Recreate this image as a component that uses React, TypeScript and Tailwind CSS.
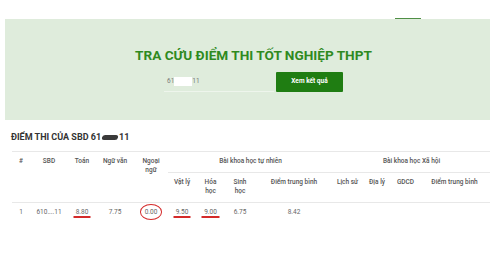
import React from "react";

const th = "font-medium text-[#555] text-[6.5px] leading-[9px] align-top pt-[5px] pb-[6px] text-center";
const td = "text-[#666] text-[6.5px] leading-[9px] pt-[5px] pb-[5px] text-center";

function Under({ v }: { v: string }) {
	return <span className="px-[3px] shadow-[0_2.5px_0_-0.5px_#d42a2a]">{v}</span>;
}

export default function App() {
	return (
		<div className="w-[500px] h-[258px] bg-white font-['Roboto',sans-serif] overflow-hidden">
			<div className="h-[19px] flex justify-end pr-[79px] items-end">
				<div className="w-[26px] h-[1.5px] bg-[#4f8f46]" />
			</div>
			<div className="mx-[5px] w-[485px] h-[101px] bg-[#dfecdc] flex flex-col items-center pl-[12px] pt-[28px]">
				<h1 className="text-[13.6px] leading-[16px] font-bold text-[#2f8a1f]">
					TRA CỨU ĐIỂM THI TỐT NGHIỆP THPT
				</h1>
				<div className="flex mt-[9px] h-[20px] gap-[2px]">
					<div className="w-[110px] border-b border-[#eef5ec] flex items-center pl-[3px] text-[6.5px] text-[#777]">
						<span>61</span>
						<span className="inline-block w-[18px] h-[9px] bg-white" />
						<span>11</span>
					</div>
					<button className="w-[67px] h-[20px] bg-[#1f7d12] rounded-[1px] text-white text-[6.5px] font-bold">
						Xem kết quả
					</button>
				</div>
			</div>
			<h2 className="mt-[10px] ml-[11px] text-[9px] leading-[14px] font-bold text-[#333] flex items-center">
				ĐIỂM THI CỦA SBD 61
				<span className="inline-block w-[16px] h-[5px] bg-[#3a3a3a] rounded-full mx-[1px] -skew-x-12" />
				11
			</h2>
			<table className="ml-[12px] mt-[7px] w-[478px] table-fixed border-collapse">
				<colgroup>
					<col className="w-[18px]" />
					<col className="w-[38px]" />
					<col className="w-[28px]" />
					<col className="w-[38px]" />
					<col className="w-[34px]" />
					<col className="w-[28px]" />
					<col className="w-[29px]" />
					<col className="w-[30px]" />
					<col className="w-[78px]" />
					<col className="w-[29px]" />
					<col className="w-[30px]" />
					<col className="w-[27px]" />
					<col className="w-[71px]" />
				</colgroup>
				<thead>
					<tr className="border-t border-[#e8e8e8]">
						<th rowSpan={2} className={th}>#</th>
						<th rowSpan={2} className={th}>SBD</th>
						<th rowSpan={2} className={th}>Toán</th>
						<th rowSpan={2} className={th}>Ngữ văn</th>
						<th rowSpan={2} className={th}>Ngoại<br />ngữ</th>
						<th colSpan={4} className={th}>Bài khoa học tự nhiên</th>
						<th colSpan={4} className={th}>Bài khoa học Xã hội</th>
					</tr>
					<tr className="border-b border-[#e8e8e8]">
						<th className={th + " border-t border-[#e8e8e8]"}>Vật lý</th>
						<th className={th + " border-t border-[#e8e8e8]"}>Hóa<br />học</th>
						<th className={th + " border-t border-[#e8e8e8]"}>Sinh<br />học</th>
						<th className={th + " border-t border-[#e8e8e8]"}>Điểm trung bình</th>
						<th className={th + " border-t border-[#e8e8e8]"}>Lịch sử</th>
						<th className={th + " border-t border-[#e8e8e8]"}>Địa lý</th>
						<th className={th + " border-t border-[#e8e8e8]"}>GDCD</th>
						<th className={th + " border-t border-[#e8e8e8]"}>Điểm trung bình</th>
					</tr>
				</thead>
				<tbody>
					<tr>
						<td className={td}>1</td>
						<td className={td}>610....11</td>
						<td className={td}><Under v="8.80" /></td>
						<td className={td}>7.75</td>
						<td className={td}>
							<span className="border-[1.5px] border-[#d42a2a] rounded-[50%] px-[4px] py-[3px]">0.00</span>
						</td>
						<td className={td}><Under v="9.50" /></td>
						<td className={td}><Under v="9.00" /></td>
						<td className={td}>6.75</td>
						<td className={td}>8.42</td>
						<td className={td}></td>
						<td className={td}></td>
						<td className={td}></td>
						<td className={td}></td>
					</tr>
				</tbody>
			</table>
		</div>
	);
}
